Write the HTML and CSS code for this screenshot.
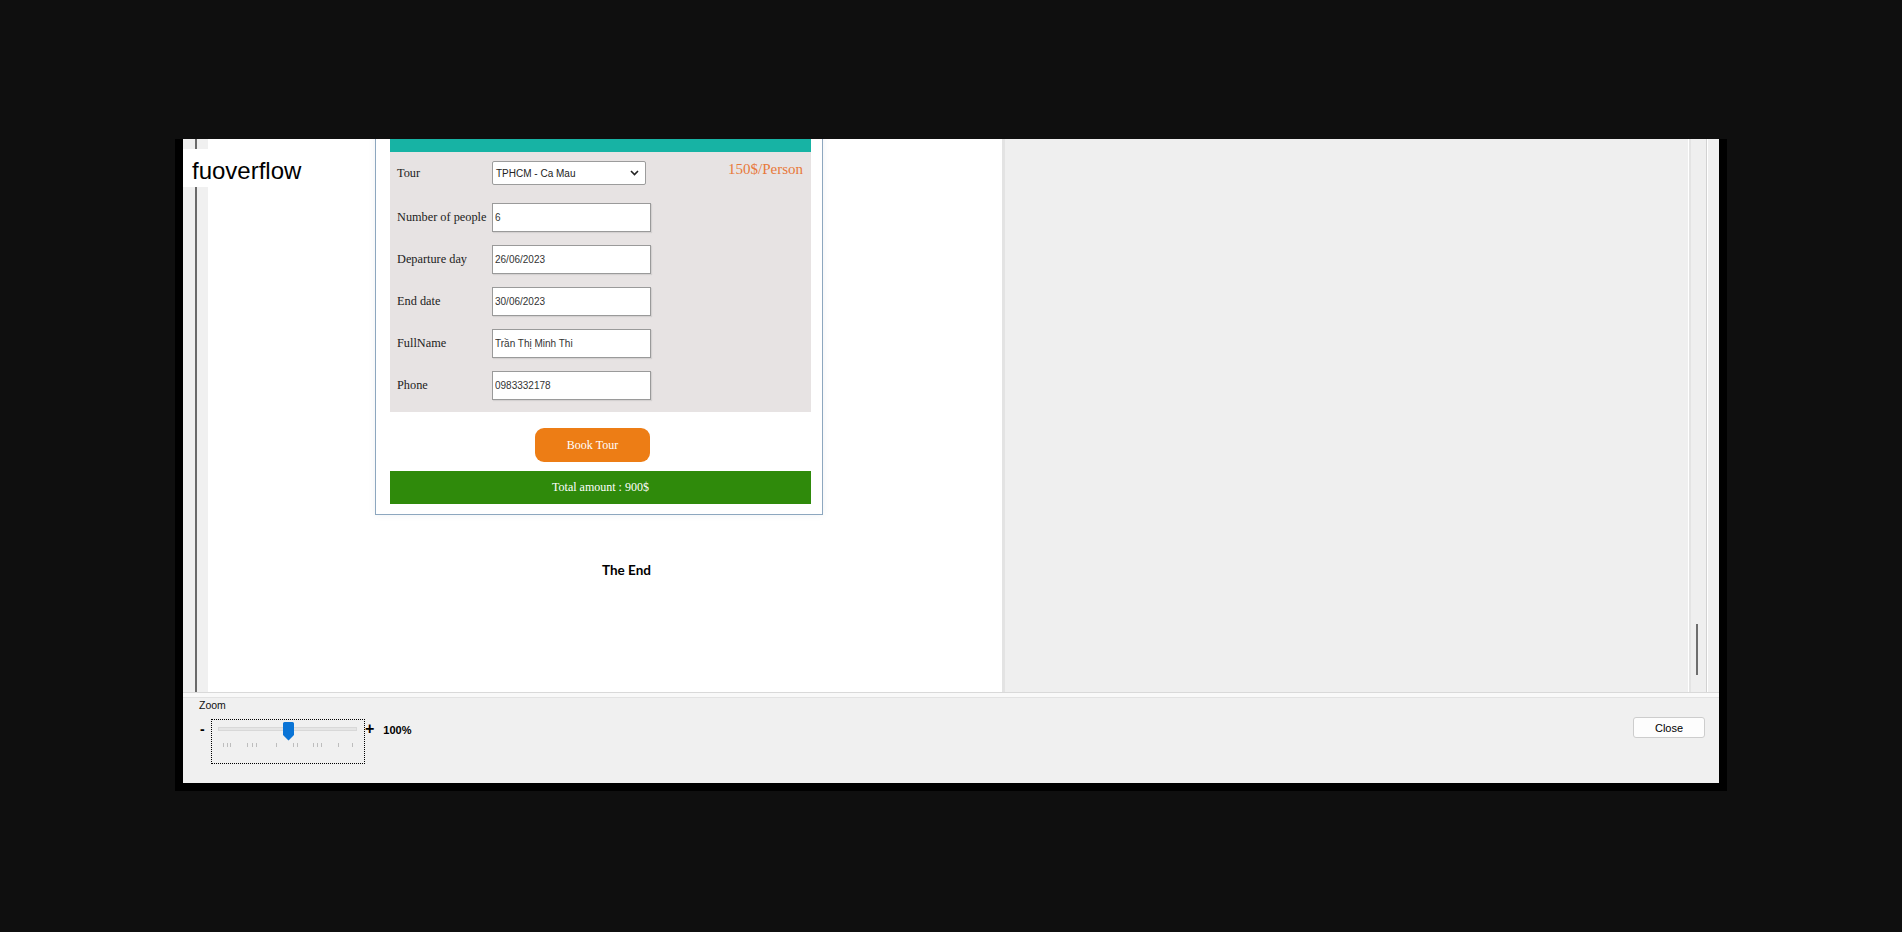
FILE: index.html
```html
<!DOCTYPE html>
<html>
<head>
<meta charset="utf-8">
<title>Report Viewer</title>
<link rel="stylesheet" href="styles.css">
</head>
<body>
<div class="window">
  <div class="viewer">
    <div class="lstrip"><div class="lline"></div></div>
    <div class="page">
      <div class="sheet">
        <div class="card">
          <div class="card-head"></div>
          <div class="panel">
            <div class="row row-tour">
              <span class="lbl">Tour</span>
              <div class="select"><span>TPHCM - Ca Mau</span>
                <svg class="chev" width="9" height="6" viewBox="0 0 9 6"><path d="M1 1l3.5 3.5L8 1" fill="none" stroke="#222" stroke-width="1.6"/></svg>
              </div>
              <span class="price">150$/Person</span>
            </div>
            <div class="row"><span class="lbl">Number of people</span><input class="inp" value="6"></div>
            <div class="row"><span class="lbl">Departure day</span><input class="inp" value="26/06/2023"></div>
            <div class="row"><span class="lbl">End date</span><input class="inp" value="30/06/2023"></div>
            <div class="row"><span class="lbl">FullName</span><input class="inp" value="Trần Thị Minh Thi"></div>
            <div class="row"><span class="lbl">Phone</span><input class="inp" value="0983332178"></div>
          </div>
          <button class="book">Book Tour</button>
          <div class="total">Total amount : 900$</div>
        </div>
        <div class="the-end">The End</div>
      </div>
    </div>
    <div class="gutter"></div>
    <div class="grey"></div>
    <div class="vscroll">
      <div class="vtrack"><div class="vthumb"></div></div>
    </div>
  </div>
  <div class="sep"></div>
  <div class="bottom">
    <div class="zoom-group">
      <div class="zoom-label">Zoom</div>
      <div class="slider-row">
        <span class="minus">-</span>
        <div class="slider-box">
          <div class="track"></div>
          <svg class="ticks" width="154" height="4" viewBox="0 0 154 4">
            <g fill="#bdbdbd">
              <rect x="12" y="0" width="1" height="4"/><rect x="16" y="0" width="1" height="4"/><rect x="19" y="0" width="1" height="4"/>
              <rect x="36" y="0" width="1" height="4"/><rect x="41" y="0" width="1" height="4"/><rect x="45" y="0" width="1" height="4"/>
              <rect x="65" y="0" width="1" height="4"/>
              <rect x="82" y="0" width="1" height="4"/><rect x="86" y="0" width="1" height="4"/>
              <rect x="102" y="0" width="1" height="4"/><rect x="106" y="0" width="1" height="4"/><rect x="110" y="0" width="1" height="4"/>
              <rect x="127" y="0" width="1" height="4"/>
              <rect x="141" y="0" width="1" height="4"/>
            </g>
          </svg>
          <svg class="thumb" width="11" height="19" viewBox="0 0 11 19"><path d="M1.5 0h8A1.5 1.5 0 0 1 11 1.5V13l-5.5 5.5L0 13V1.5A1.5 1.5 0 0 1 1.5 0z" fill="#0a74d6"/></svg>
        </div>
        <span class="plus">+</span>
        <span class="pct">100%</span>
      </div>
    </div>
    <button class="close">Close</button>
  </div>
  <div class="watermark">fuoverflow</div>
</div>
</body>
</html>
```

FILE: styles.css
```css
* { box-sizing: border-box; }
html, body { margin: 0; }
body {
  width: 1902px;
  height: 932px;
  overflow: hidden;
  background: #0f0f0f;
  padding: 139px 0 0 183px;
  font-family: "Liberation Sans", Arial, sans-serif;
}
.window {
  position: relative;
  width: 1536px;
  height: 644px;
  background: #f0f0f0;
  display: flex;
  flex-direction: column;
  box-shadow: 8px 0 0 #000, -8px 0 0 #000, 0 8px 0 #000, 8px 8px 0 #000, -8px 8px 0 #000;
}
.viewer {
  height: 553px;
  display: flex;
  flex: none;
}
.lstrip {
  width: 25px;
  background: #f0f0f0;
  flex: none;
}
.lline {
  margin-left: 12px;
  width: 2px;
  height: 100%;
  background: #6a6a6a;
}
.page {
  width: 794px;
  flex: none;
  background: #fff;
  overflow: hidden;
}
.sheet {
  margin-top: -62px;
  padding-left: 167px;
}
.card {
  margin-top: 20px;
  width: 448px;
  border: 1px solid #8da7bf;
  padding: 14px 11px 10px 14px;
  background: #fff;
  box-shadow: 0 0 6px rgba(120, 140, 160, 0.12);
}
.card-head {
  height: 40px;
  background: #17b3a4;
}
.panel {
  height: 260px;
  background: #e7e3e3;
  padding: 9px 0 0 7px;
}
.row {
  display: flex;
  align-items: center;
  height: 29px;
  margin-bottom: 13px;
}
.row-tour {
  height: 24px;
  margin-bottom: 18px;
}
.lbl {
  width: 95px;
  flex: none;
  font: 12.3px "Liberation Serif", "Times New Roman", serif;
  color: #222;
  white-space: nowrap;
}
.select {
  width: 154px;
  height: 24px;
  border: 1px solid #9c9c9c;
  border-radius: 2px;
  background: #fff;
  display: flex;
  align-items: center;
  justify-content: space-between;
  padding: 0 6px 0 3px;
  font: 10px "Liberation Sans", Arial, sans-serif;
  color: #222;
}
.chev { display: block; }
.price {
  margin-left: auto;
  margin-right: 8px;
  align-self: flex-start;
  line-height: 18px;
  font: 15px "Liberation Serif", "Times New Roman", serif;
  color: #e8793a;
}
.inp {
  width: 159px;
  height: 29px;
  border: 1px solid #9a9a9a;
  border-radius: 0;
  padding: 0 2px;
  margin: 0;
  font: 10px "Liberation Sans", Arial, sans-serif;
  color: #333;
  background: #fff;
  box-shadow: 1px 1px 1px rgba(0, 0, 0, 0.08);
  outline: none;
}
.book {
  display: block;
  margin: 16px 0 0 145px;
  width: 115px;
  height: 34px;
  border: none;
  border-radius: 9px;
  background: #ed7d15;
  color: #fff;
  font: 12px "Liberation Serif", "Times New Roman", serif;
  padding: 0;
}
.total {
  margin-top: 9px;
  height: 33px;
  background: #2f8a0b;
  color: #fff;
  text-align: center;
  line-height: 33px;
  font-family: "Liberation Serif", "Times New Roman", serif;
  font-size: 12px;
}
.the-end {
  margin: 45px 0 0 227px;
  font: 700 13.5px Lato, "Open Sans", sans-serif;
  line-height: 20px;
  color: #000;
}
.gutter {
  width: 3px;
  flex: none;
  background: #e3e3e3;
}
.grey {
  flex: 1;
  background: #efefef;
}
.vscroll {
  width: 31px;
  flex: none;
  background: #f0f0f0;
}
.vtrack {
  width: 19px;
  height: 100%;
  border-left: 1px solid #fff;
  border-right: 1px solid #d2d2d2;
  box-shadow: inset 2px 0 0 #e4e4e4, 1px 0 0 #fff;
  background: #efefef;
  padding-top: 485px;
}
.vthumb {
  margin-left: 7px;
  width: 2px;
  height: 51px;
  background: #6e6e6e;
}
.sep {
  height: 6px;
  flex: none;
  border-top: 1px solid #d9d9d9;
  border-bottom: 1px solid #e2e2e2;
  background: #f9f9f9;
}
.bottom {
  flex: 1;
  display: flex;
  justify-content: space-between;
  align-items: flex-start;
  padding: 1px 14px 0 16px;
}
.zoom-group {
  display: flex;
  flex-direction: column;
}
.zoom-label {
  font-size: 10.5px;
  line-height: 12px;
  color: #111;
}
.slider-row {
  display: flex;
  align-items: flex-start;
  margin-top: 8px;
}
.minus {
  width: 11px;
  margin-left: 1px;
  font-weight: 700;
  font-size: 14px;
  line-height: 20px;
}
.slider-box {
  position: relative;
  width: 154px;
  height: 45px;
  border: 1px dotted #000;
}
.track {
  position: absolute;
  left: 6px;
  top: 7px;
  width: 139px;
  height: 4px;
  background: #e5e5e5;
  border: 1px solid #d8d8d8;
}
.ticks {
  position: absolute;
  left: -1px;
  top: 23px;
}
.thumb {
  position: absolute;
  left: 71px;
  top: 2px;
}
.plus {
  margin-left: 0;
  font-weight: 700;
  font-size: 16px;
  line-height: 20px;
}
.pct {
  margin-left: 9px;
  font-weight: 700;
  font-size: 11px;
  line-height: 22px;
}
.close {
  margin-top: 18px;
  width: 72px;
  height: 21px;
  border: 1px solid #cdcdcd;
  border-radius: 3px;
  background: #fdfdfd;
  font: 11px "Liberation Sans", Arial, sans-serif;
  color: #000;
  padding: 0;
}
.watermark {
  position: absolute;
  left: 0;
  top: 10px;
  height: 38px;
  padding: 5px 2px 0 9px;
  background: #fff;
  font-size: 24px;
  line-height: 33px;
  color: #000;
}
```
